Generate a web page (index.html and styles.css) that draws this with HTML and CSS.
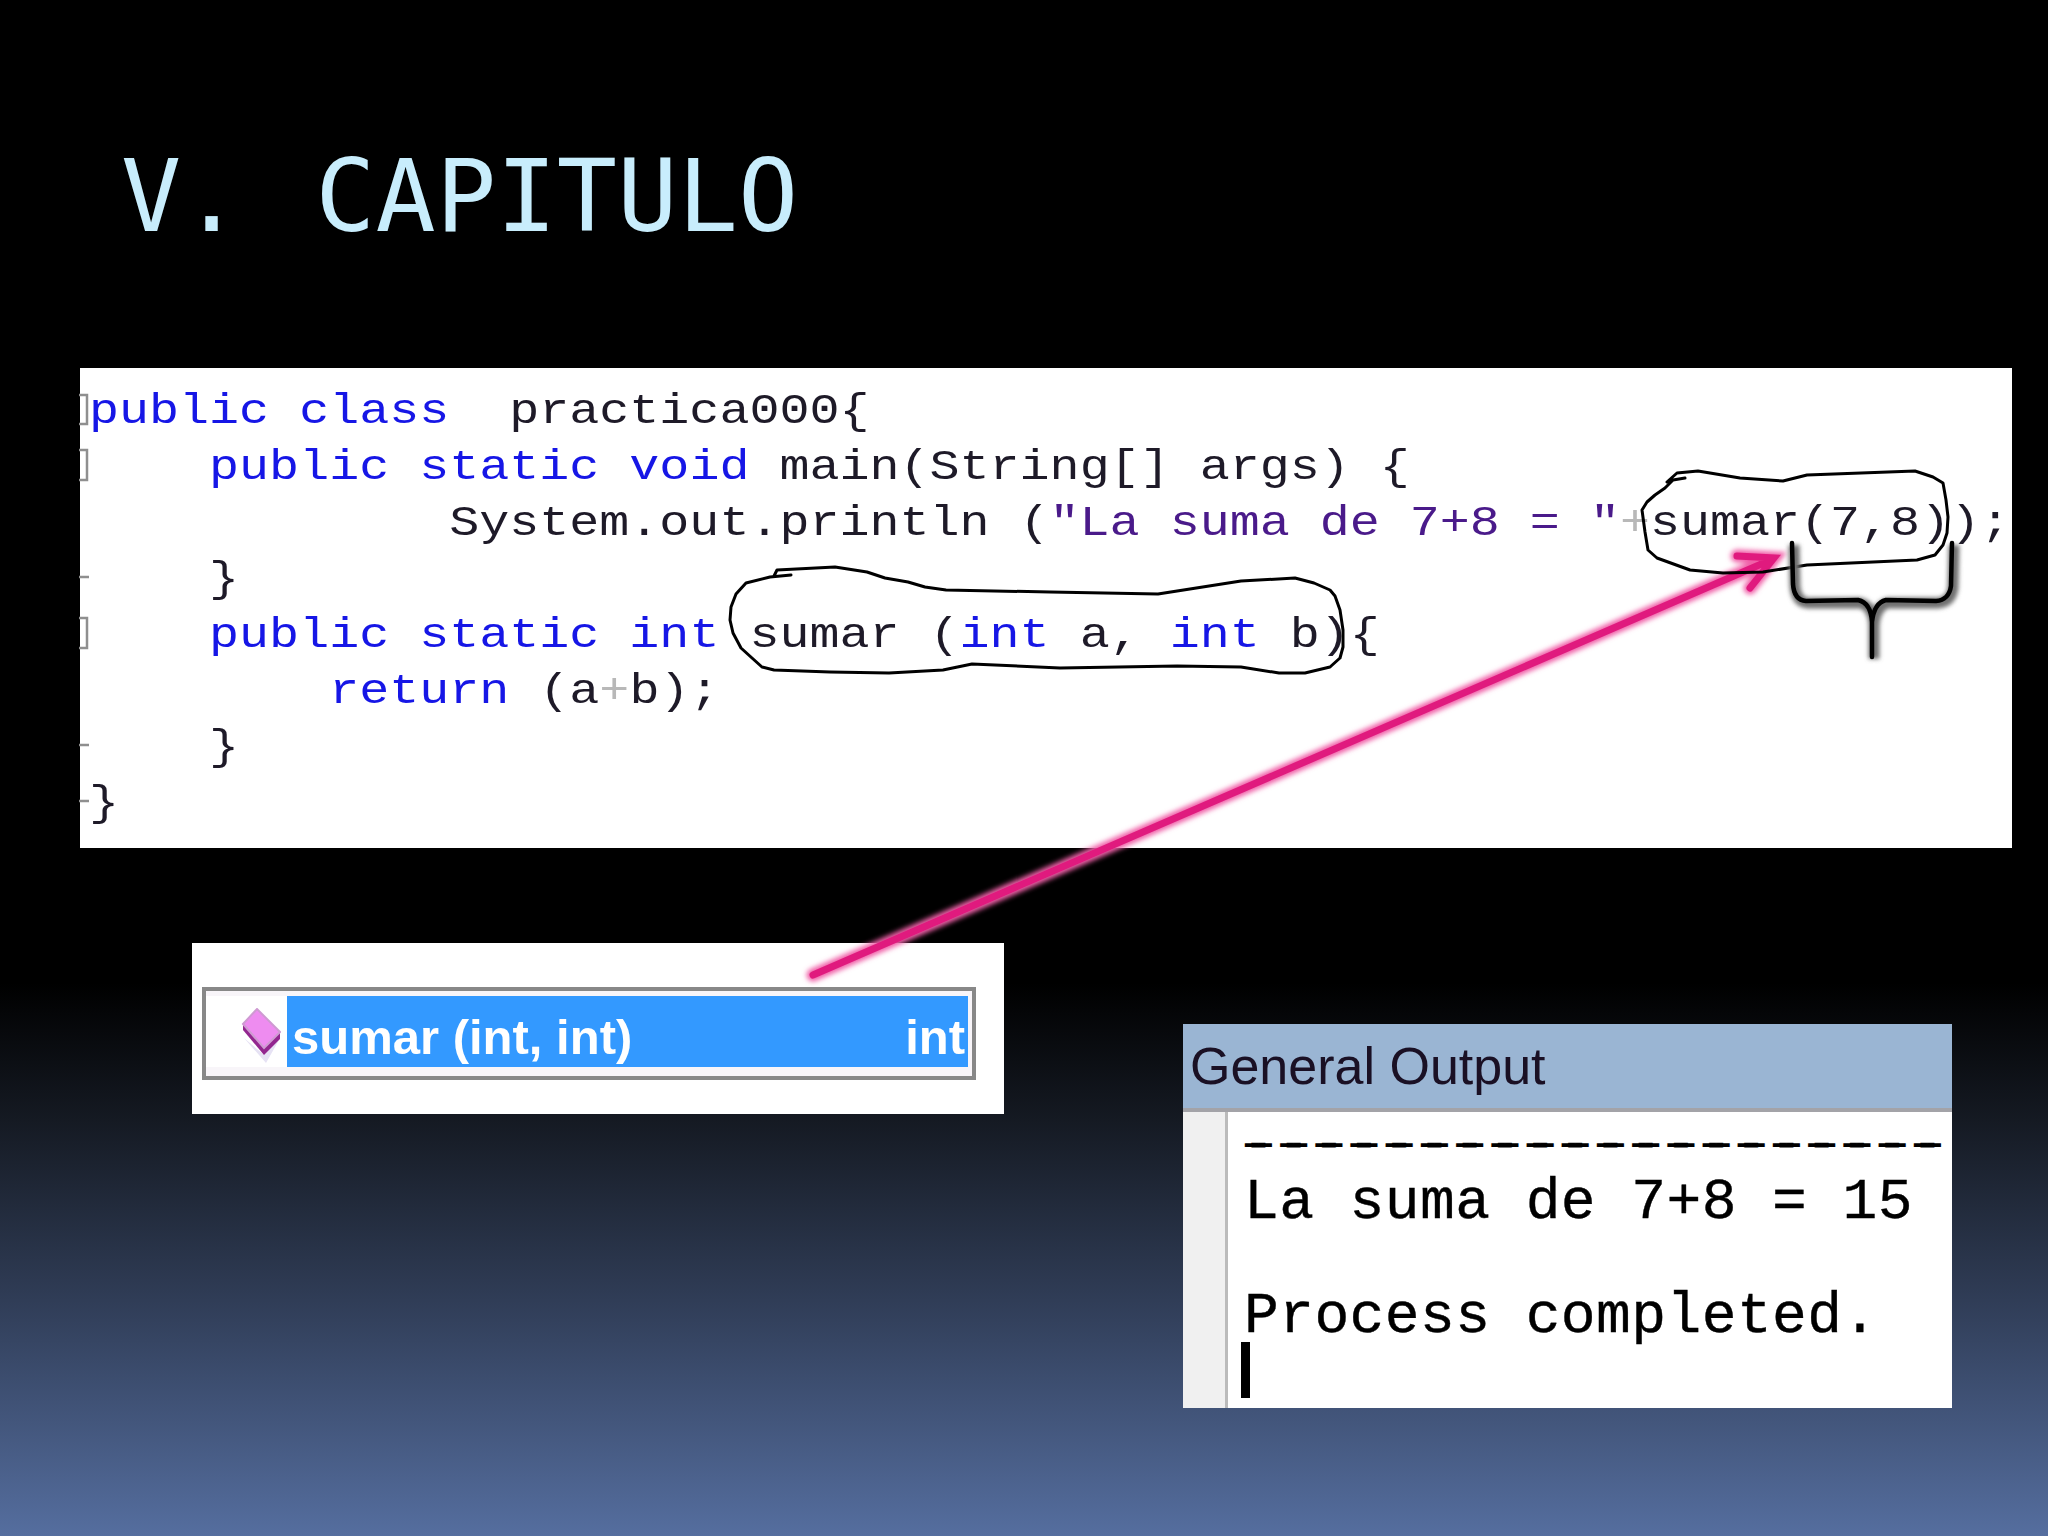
FILE: index.html
```html
<!DOCTYPE html>
<html lang="es">
<head>
<meta charset="utf-8">
<title>V. CAPITULO</title>
<link rel="stylesheet" href="styles.css">
</head>
<body>
<main class="slide">
  <h1 class="title">V. CAPITULO</h1>
  <section class="code-panel">
    <div class="code">
      <div class="line"><span class="kw">public class</span>  practica000{</div>
      <div class="line">    <span class="kw">public static void</span> main(String[] args) {</div>
      <div class="line">            System.out.println (<span class="str">"La suma de 7+8 = "</span><span class="op">+</span>sumar(7,8));</div>
      <div class="line">    }</div>
      <div class="line">    <span class="kw">public static int</span> sumar (<span class="kw">int</span> a, <span class="kw">int</span> b){</div>
      <div class="line">        <span class="kw">return</span> (a<span class="op">+</span>b);</div>
      <div class="line">    }</div>
      <div class="line">}</div>
    </div>
  </section>
  <div class="lower">
    <section class="popup">
      <div class="popup-frame">
        <div class="popup-icon">
          <svg class="diamond" viewBox="0 0 40 56" width="40" height="56" aria-hidden="true">
            <polygon points="3,30 22,46 38,32 25,55" fill="#e6e2f4"/>
            <polygon points="2,16 16,1 39,24 39,31 23,47 2,22" fill="#93268f"/>
            <polygon points="2,16 16,1 39,24 23,40" fill="#ee8cf0" stroke="#cf9ad2" stroke-width="2"/>
          </svg>
        </div>
        <div class="popup-row">
          <span>sumar (int, int)</span>
          <span>int</span>
        </div>
      </div>
    </section>
    <section class="output">
      <header class="output-head">General Output</header>
      <div class="output-body">
        <div class="output-gutter"></div>
        <div class="output-text">
          <div class="out-line out-rule">--------------------</div>
          <div class="out-line">La suma de 7+8 = 15</div>
          <div class="out-line out-empty"></div>
          <div class="out-line">Process completed.</div>
          <div class="cursor"></div>
        </div>
      </div>
    </section>
  </div>
  <svg class="ink" viewBox="0 0 2048 1536" width="2048" height="1536" aria-hidden="true">
    <defs>
      <filter id="soft" x="-20%" y="-20%" width="140%" height="140%"><feGaussianBlur stdDeviation="2.5"/></filter>
      <filter id="softer" x="-20%" y="-20%" width="140%" height="140%"><feGaussianBlur stdDeviation="2"/></filter>
    </defs>
    <g class="gutter-marks">
      <path d="M79 395H87V424H79"/>
      <path d="M79 450H87V480H79"/>
      <path d="M79 618H87V648H79"/>
      <path d="M79 577H89M79 745H89M79 801H89"/>
    </g>
    <path class="arrow-glow" filter="url(#soft)" d="M813 975 L1766 562 M1737 556 L1774 558 L1750 588"/>
    <path class="arrow" d="M813 975 L1766 562 M1737 556 L1774 558 L1750 588"/>
    <path class="loop" d="M791 575 L770 577 L746 583 L736 594 L731 607 L730 620 L733 633 L741 648 L752 658 L762 667 L774 670 L830 672 L889 673 L943 670 L972 664 L1060 668 L1177 666 L1241 667 L1279 673 L1305 673 L1330 667 L1340 658 L1343 647 L1343 630 L1340 610 L1335 596 L1330 590 L1314 583 L1295 578 L1241 581 L1158 594 L1050 592 L946 590 L925 587 L908 582 L885 578 L867 572 L835 567 L777 570 L774 576"/>
    <path class="loop" d="M1685 478 L1673 480 L1665 488 L1655 495 L1647 502 L1642 510 L1645 532 L1648 550 L1657 558 L1690 570 L1723 573 L1763 572 L1807 565 L1917 560 L1935 555 L1943 545 L1947 533 L1948 517 L1946 500 L1943 483 L1933 477 L1915 471 L1807 475 L1783 481 L1740 478 L1698 471 L1677 473 L1667 482"/>
    <path class="brace-shadow" filter="url(#softer)" d="M1794 545 L1795 586 Q1796 602 1808 603 L1860 603 Q1873 606 1874 625 L1874 659 M1874 625 Q1876 606 1888 603 L1938 603 Q1951 602 1953 588 L1954 545"/>
    <path class="brace" d="M1792 543 L1793 584 Q1794 600 1806 601 L1858 600 Q1871 603 1872 622 L1872 657 M1872 622 Q1874 603 1886 600 L1936 601 Q1949 600 1951 586 L1952 543"/>
  </svg>
</main>
</body>
</html>
```
FILE: styles.css
```css
* { box-sizing: border-box; }
html, body { margin: 0; padding: 0; background: #000; }
.slide {
  position: relative;
  width: 2048px;
  height: 1536px;
  overflow: hidden;
  background: linear-gradient(180deg, #000 0, #000 64%, #151a23 73%, #33415d 86%, #556e9f 100%);
}
.title {
  margin: 0 0 111px;
  padding: 137px 0 0 121px;
  height: 257px;
  font: 400 100px/120px "DejaVu Sans Mono", monospace;
  letter-spacing: 0.2px;
  word-spacing: 13px;
  color: #c8edfc;
}
.code-panel {
  margin-left: 80px;
  width: 1932px;
  height: 480px;
  padding: 16px 0 0 9px;
  background: #fff;
  overflow: hidden;
}
.code {
  font: 400 42px/56px "Liberation Mono", monospace;
  color: #1e1a28;
  transform: scaleX(1.191);
  transform-origin: 0 0;
  width: 1600px;
  filter: blur(0.35px);
}
.line { height: 56px; white-space: pre; }
.kw { color: #1616e6; }
.str { color: #4a1a8a; }
.op { color: #b8b8b8; }
.lower { display: flex; align-items: flex-start; }
.popup {
  margin: 95px 0 0 192px;
  width: 812px;
  height: 171px;
  padding: 44px 28px 34px 10px;
  background: #fff;
}
.popup-frame {
  display: flex;
  height: 93px;
  padding: 5px 4px 9px 0;
  background: #f8f5f9;
  border: 4px solid #888;
}
.popup-icon {
  width: 81px;
  padding: 12px 0 0 35px;
  background: #fff;
}
.diamond { display: block; }
.popup-row {
  flex: 1;
  display: flex;
  justify-content: space-between;
  padding: 10px 3px 0 5px;
  align-items: center;
  background: #39f;
  color: #fff;
  font: 700 49px/56px "Liberation Sans", sans-serif;
  white-space: nowrap;
  filter: blur(0.3px);
}
.output {
  margin: 176px 0 0 179px;
  width: 769px;
  height: 384px;
  background: #fff;
  overflow: hidden;
}
.output-head {
  height: 88px;
  padding: 12px 0 0 7px;
  background: #9ab5d3;
  border-bottom: 4px solid #a3a3a8;
  font: 400 52px/60px "Liberation Sans", sans-serif;
  color: #1a1024;
}
.output-body { display: flex; height: 296px; }
.output-gutter {
  width: 45px;
  background: #f0f0f0;
  border-right: 3px solid #bbb;
}
.output-text { padding: 5px 0 0 16px; flex: 1; overflow: hidden; }
.out-line {
  height: 57px;
  white-space: pre;
  font: 400 58px/57px "Liberation Mono", monospace;
  letter-spacing: 0.4px;
  color: #000;
  -webkit-text-stroke: 0.4px #000;
}
.out-rule {
  font-size: 48px;
  letter-spacing: 6.4px;
  -webkit-text-stroke: 0.9px #000;
  text-shadow: 7px 0 0 #000, -7px 0 0 #000;
}
.cursor {
  width: 9px;
  height: 56px;
  margin: -3px 0 0 -3px;
  background: #000;
}
.ink {
  position: absolute;
  left: 0;
  top: 0;
  pointer-events: none;
  fill: none;
}
.gutter-marks path { stroke: #8f8f8f; stroke-width: 2.5; }
.loop { stroke: #000; stroke-width: 3; stroke-linejoin: round; stroke-linecap: round; }
.brace { stroke: #000; stroke-width: 4.5; stroke-linejoin: round; stroke-linecap: round; }
.brace-shadow { stroke: #6f6f6f; stroke-width: 11; stroke-linejoin: round; }
.arrow { stroke: #e01a7e; stroke-width: 7; stroke-linecap: round; stroke-linejoin: miter; }
.arrow-glow { stroke: #f060a8; stroke-width: 13; stroke-linecap: round; }
```
